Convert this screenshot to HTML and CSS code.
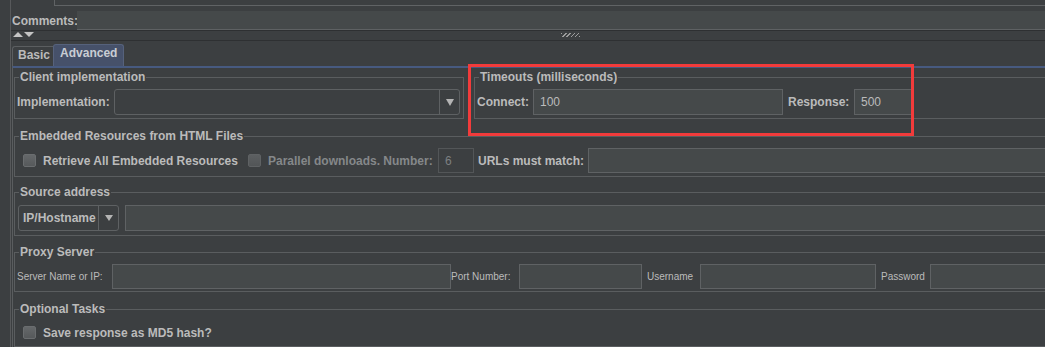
FILE: index.html
```html
<!DOCTYPE html>
<html lang="en">
<head>
  <meta charset="UTF-8" />
  <meta name="viewport" content="width=device-width, initial-scale=1.0"/>
  <title>HTTP Request - Advanced</title>
  <link rel="stylesheet" href="styles.css">
</head>
<body>
  <div class="page">
    <div class="name-row"><div class="name-field"></div></div>

    <div class="comments-row">
      <span class="lbl">Comments:</span>
      <div class="comments-field"></div>
    </div>

    <div class="splitter">
      <span class="arrow-up"></span>
      <span class="arrow-down"></span>
      <span class="grip"></span>
    </div>

    <div class="tabs">
      <div class="tab">Basic</div>
      <div class="tab active">Advanced</div>
    </div>

    <div class="tab-body">
      <div class="top-row">
        <fieldset class="group client">
          <legend>Client implementation</legend>
          <div class="row client-row">
            <span class="lbl">Implementation:</span>
            <div class="combo">
              <span class="combo-text"></span>
              <span class="combo-btn"><i class="tri"></i></span>
            </div>
          </div>
        </fieldset>

        <fieldset class="group timeouts open">
          <legend>Timeouts (milliseconds)</legend>
          <div class="row timeouts-row">
            <span class="lbl">Connect:</span>
            <div class="field">100</div>
            <span class="lbl pad">Response:</span>
            <div class="field">500</div>
          </div>
        </fieldset>
      </div>

      <fieldset class="group embedded open">
        <legend>Embedded Resources from HTML Files</legend>
        <div class="row embedded-row">
          <label class="checkline"><span class="check"></span>Retrieve All Embedded Resources</label>
          <label class="checkline disabled"><span class="check"></span>Parallel downloads. Number:</label>
          <div class="field off">6</div>
          <span class="lbl pad-s">URLs must match:</span>
          <div class="field open"></div>
        </div>
      </fieldset>

      <fieldset class="group source open">
        <legend>Source address</legend>
        <div class="row source-row">
          <div class="combo">
            <span class="combo-text">IP/Hostname</span>
            <span class="combo-btn"><i class="tri small"></i></span>
          </div>
          <div class="field open"></div>
        </div>
      </fieldset>

      <fieldset class="group proxy open">
        <legend>Proxy Server</legend>
        <div class="row proxy-row">
          <span class="small-lbl">Server Name or IP:</span>
          <div class="field"></div>
          <span class="small-lbl">Port Number:</span>
          <div class="field"></div>
          <span class="small-lbl pad">Username</span>
          <div class="field"></div>
          <span class="small-lbl pad">Password</span>
          <div class="field open"></div>
        </div>
      </fieldset>

      <fieldset class="group optional open">
        <legend>Optional Tasks</legend>
        <div class="row optional-row">
          <label class="checkline"><span class="check"></span>Save response as MD5 hash?</label>
        </div>
      </fieldset>
    </div>
  </div>

  <!-- annotation drawn over the screenshot -->
  <div class="highlight"></div>
</body>
</html>
```

FILE: styles.css
```css
* {
  box-sizing: border-box;
  margin: 0;
  padding: 0;
}
body {
  font-family: "Liberation Sans", Arial, sans-serif;
  font-size: 12px;
  font-weight: bold;
  background-color: #3c3f41;
  color: #bbbbbb;
  overflow: hidden;
  position: relative;
  height: 347px;
}
.page {
  margin-left: 10px;
  border-left: 1px solid #57595b;
  height: 347px;
}

/* top pane */
.name-row {
  height: 6px;
  padding-left: 43px;
}
.name-field {
  height: 6px;
  border-left: 1px solid #606365;
  border-bottom: 1px solid #606365;
}
.comments-row {
  margin-top: 5px;
  padding-left: 1px;
  display: grid;
  grid-template-columns: 65px 1fr;
  align-items: center;
}
.comments-field {
  height: 19px;
  background: #45494a;
  border-bottom: 1px solid #5e6163;
}
.splitter {
  height: 11px;
  border-top: 1px solid #2e3032;
  border-bottom: 1px solid #2e3032;
  padding: 1px 0 0 2px;
  display: flex;
  align-items: flex-start;
}
.arrow-up {
  width: 0;
  height: 0;
  border-left: 5px solid transparent;
  border-right: 5px solid transparent;
  border-bottom: 5px solid #c4c4c4;
}
.arrow-down {
  width: 0;
  height: 0;
  margin-left: 1px;
  border-left: 5px solid transparent;
  border-right: 5px solid transparent;
  border-top: 5px solid #c4c4c4;
}
.grip {
  width: 19px;
  height: 4px;
  margin: 1px 0 0 527px;
  background: repeating-linear-gradient(-45deg, #9c9c9c 0 1px, #3c3f41 1px 3px);
}

/* tabs */
.tabs {
  height: 25px;
  padding-left: 1px;
  display: flex;
  align-items: flex-end;
}
.tab {
  height: 20px;
  padding: 1px 3px 0 5px;
  line-height: 15px;
  border: 1px solid #5b5e60;
  border-right: none;
  border-bottom: none;
  border-top-left-radius: 3px;
}
.tab.active {
  height: 22px;
  padding: 1px 6px 0 6px;
  background: #46516a;
  color: #c9cdd4;
  border: 1px solid #56627c;
  border-bottom: none;
  border-radius: 3px 3px 0 0;
}
.tab-body {
  margin-left: 1px;
  border-top: 2px solid #475a80;
  border-left: 1px solid #5a5d5f;
  padding: 2px 0 0 1px;
}

/* titled groups */
.group {
  border: 1px solid #5a5d5f;
  min-width: 0;
}
.group.open {
  border-right: none;
}
.group legend {
  margin-left: 4px;
  padding: 0 1px;
  line-height: 14px;
}
.top-row {
  display: grid;
  grid-template-columns: 450px 1fr;
  column-gap: 10px;
}
.row {
  display: grid;
  align-items: center;
}
.client .row,
.timeouts .row {
  padding: 5px 0 3px 2px;
  grid-template-columns: 97px 346px;
  height: 34px;
}
.timeouts .row {
  grid-template-columns: 56px 250px 71px 60px;
}
.embedded {
  margin-top: 10px;
}
.embedded .row {
  padding: 5px 0 3px 8px;
  grid-template-columns: 225px 190px 36px 114px 1fr;
  height: 33px;
}
.source {
  margin-top: 8px;
}
.source .row {
  padding: 6px 0 4px 3px;
  grid-template-columns: 101px 1fr;
  column-gap: 6px;
  height: 36px;
}
.proxy {
  margin-top: 9px;
}
.proxy .row {
  padding: 5px 0 2px 2px;
  grid-template-columns: 95px 339px 68px 123px 58px 176px 54px 1fr;
  height: 32px;
}
.optional {
  margin-top: 10px;
}
.optional .row {
  padding: 4px 0 1px 8px;
  height: 30px;
}

/* controls */
.lbl {
  white-space: nowrap;
}
.pad {
  padding-left: 5px;
}
.pad-s {
  padding-left: 4px;
}
.small-lbl {
  font-size: 10px;
  font-weight: normal;
  white-space: nowrap;
}
.field {
  height: 100%;
  background: #45494a;
  border: 1px solid #5f6264;
  padding-left: 6px;
  font-weight: normal;
  display: flex;
  align-items: center;
}
.field.open {
  border-right: none;
}
.field.off {
  background: transparent;
  border-color: #535658;
  color: #7d8082;
}
.combo {
  height: 100%;
  display: flex;
  border: 1px solid #5e6163;
  border-radius: 3px;
}
.combo-text {
  flex: 1;
  padding-left: 4px;
  display: flex;
  align-items: center;
}
.combo-btn {
  width: 20px;
  border-left: 1px solid #5e6163;
  display: flex;
  align-items: center;
  justify-content: center;
}
.tri {
  width: 0;
  height: 0;
  border-left: 4px solid transparent;
  border-right: 4px solid transparent;
  border-top: 7px solid #b4b4b4;
}
.tri.small {
  border-top-width: 6px;
}
.checkline {
  display: flex;
  align-items: center;
  white-space: nowrap;
}
.checkline.disabled {
  color: #85888a;
}
.check {
  width: 13px;
  height: 13px;
  margin-right: 7px;
  flex: none;
  border: 1px solid #6a6d6f;
  border-radius: 2px;
  background: linear-gradient(#65686a, #56595b);
}
.disabled .check {
  border-color: #5f6264;
  background: linear-gradient(#5c5f61, #525557);
}

.highlight {
  position: absolute;
  left: 468px;
  top: 64px;
  width: 446px;
  height: 72px;
  border: 3px solid #f23b3b;
}
```
